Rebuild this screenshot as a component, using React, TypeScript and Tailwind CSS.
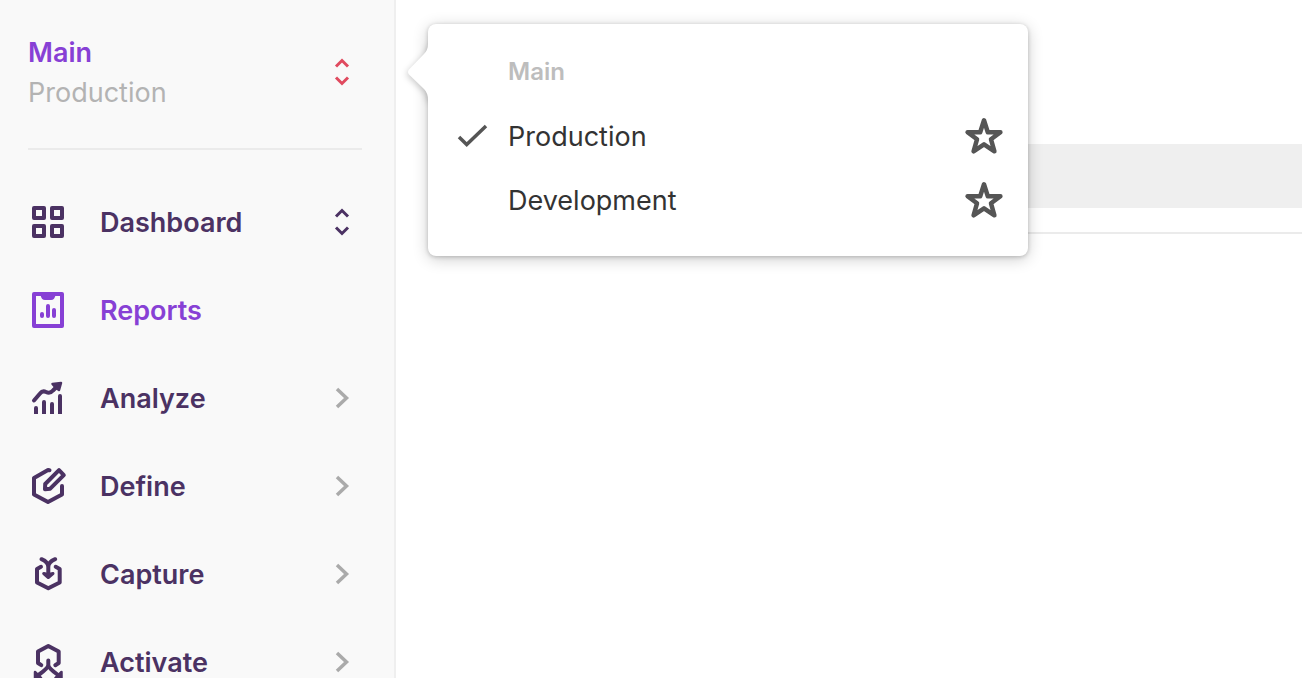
import type { ReactNode } from 'react';

function SidebarIcon({ children }: { children: ReactNode }) {
  return (
    <svg viewBox="0 0 40 40" className="size-10 shrink-0" fill="none" stroke="currentColor" strokeWidth="4" strokeLinecap="round" strokeLinejoin="round" aria-hidden="true">
      {children}
    </svg>
  );
}

const DashboardIcon = () => (
  <SidebarIcon>
    <rect x="6" y="6" width="10" height="10" />
    <rect x="24" y="6" width="10" height="10" />
    <rect x="6" y="24" width="10" height="10" />
    <rect x="24" y="24" width="10" height="10" />
  </SidebarIcon>
);

const ReportsIcon = () => (
  <SidebarIcon>
    <rect x="6" y="4" width="28" height="32" />
    <path d="M12.500 5C13 8 14.500 10 17 10H23C25.500 10 27 8 27.500 5Z" fill="currentColor" stroke="none" />
    <path d="M14 24V26M20 16V26M26 20V26" />
  </SidebarIcon>
);

const AnalyzeIcon = () => (
  <SidebarIcon>
    <path d="M6 22.500L12 15.500Q14.500 12.300 18 14Q22 16 25 12.500L30 7.500" />
    <path d="M24.500 6L33 5L31 12L28 10Z" fill="currentColor" strokeWidth="2.500" />
    <path d="M8 30V34M16 24V34M24 26V34M32 18V34" />
    <path d="M6 34H10V36H6ZM14 34H18V36H14ZM22 34H26V36H22ZM30 34H34V36H30Z" fill="currentColor" stroke="none" />
  </SidebarIcon>
);

const DefineIcon = () => (
  <SidebarIcon>
    <path d="M21.500 4.200L20 4L6 12V28.500L20 36L34 28.500V20" />
    <path d="M17 23.200L17.200 18L31 4.200L35.800 9.200L22.200 22.700Z" />
  </SidebarIcon>
);

const CaptureIcon = () => (
  <SidebarIcon>
    <path d="M13 12.800L9 15V28.500L20.300 34.300L31.700 28.500V15L27.700 12.800" />
    <path d="M13.500 5.200Q20.300 8 20.300 13Q20.300 8 27.200 5.200M20.300 12V22" />
    <path d="M15.700 19.500L20.300 20.500L25 19.500L20.300 23.500Z" fill="currentColor" strokeWidth="3" />
  </SidebarIcon>
);

const ActivateIcon = () => (
  <SidebarIcon>
    <path d="M13.300 23.200L10 21V9.500L20.300 3.900L30.700 9.500V21L27.300 23.200" />
    <path d="M20.300 18.500V23Q20.300 26 10.500 33M20.300 23Q20.300 26 30 33" />
    <path d="M7 30L13 36H7ZM33.500 30L27.500 36H33.500Z" fill="currentColor" strokeWidth="2.500" />
  </SidebarIcon>
);

const UpDown = ({ className }: { className: string }) => (
  <svg viewBox="0 0 40 40" className={`size-10 shrink-0 ${className}`} fill="none" stroke="currentColor" strokeWidth="3" aria-hidden="true">
    <path d="M14 14.500L20 8.500L26 14.500M14 25.500L20 31.500L26 25.500" />
  </svg>
);

const ChevronRight = () => (
  <svg viewBox="0 0 40 40" className="size-10 shrink-0 text-[#aaaaaa]" fill="none" stroke="currentColor" strokeWidth="3.500" aria-hidden="true">
    <path d="M15 11L24.500 20L15 29" />
  </svg>
);

const items = [
  { label: 'Dashboard', icon: <DashboardIcon />, end: <UpDown className="text-[#4b3263]" />, color: 'text-[#4b3263]' },
  { label: 'Reports', icon: <ReportsIcon />, end: null, color: 'text-[#8740d5]' },
  { label: 'Analyze', icon: <AnalyzeIcon />, end: <ChevronRight />, color: 'text-[#4b3263]' },
  { label: 'Define', icon: <DefineIcon />, end: <ChevronRight />, color: 'text-[#4b3263]' },
  { label: 'Capture', icon: <CaptureIcon />, end: <ChevronRight />, color: 'text-[#4b3263]' },
  { label: 'Activate', icon: <ActivateIcon />, end: <ChevronRight />, color: 'text-[#4b3263]' },
];

const environments = [
  { name: 'Production', selected: true },
  { name: 'Development', selected: false },
];

function EnvironmentMenu() {
  return (
    <div className="absolute top-6 left-8 w-[600px] rounded-lg bg-white pt-6 pb-6 shadow-[0_3px_16px_rgba(0,0,0,0.2),0_1px_4px_rgba(0,0,0,0.2)]">
      <svg viewBox="0 0 24 64" className="absolute top-4 -left-5 h-16 w-6 drop-shadow-[-1px_2px_3px_rgba(0,0,0,0.2)] [clip-path:inset(-10px_4px_-10px_-12px)]" aria-hidden="true">
        <path d="M24 4H20Q20 10 16 14L1 29.500Q-1 32 1 34.500L16 49Q20 53 20 60H24Z" fill="#ffffff" />
      </svg>
      <h2 className="pl-20 text-2xl leading-12 font-semibold text-[#bdbdbd]">Main</h2>
      <ul className="mt-2">
        {environments.map((env) => (
          <li key={env.name} className="flex h-16 items-center pr-6 pl-6">
            <button type="button" className="flex flex-1 items-center gap-4 text-left text-[27px] text-[#333333]">
              <svg viewBox="0 0 40 40" className="size-10" fill="none" stroke="#555555" strokeWidth="3.500" aria-hidden="true">
                {env.selected && <path d="M7 21L14.700 28.500L34 10" />}
              </svg>
              <span className="pt-0.5">{env.name}</span>
            </button>
            <button type="button" aria-label={`Favorite ${env.name}`}>
              <svg viewBox="0 0 40 40" className="size-10" fill="none" stroke="#555555" strokeWidth="4.500" strokeLinejoin="round" aria-hidden="true">
                <path d="M20 4.300L23.800 16.200H36.400L27 23.300L30.400 35.300L20 28.400L9.600 35.300L13 23.300L3.600 16.200H16.200Z" />
              </svg>
            </button>
          </li>
        ))}
      </ul>
    </div>
  );
}

export default function App() {
  return (
    <div className="flex h-screen overflow-hidden bg-white font-[Inter,sans-serif]">
      <aside className="w-[396px] shrink-0 overflow-hidden border-r-2 border-[#efefef] bg-[#f9f9f9] pr-8 pl-7">
        <button type="button" className="flex w-full items-start justify-between border-b-2 border-[#ebebeb] pt-8 pb-[35px] text-left text-[27px] leading-10">
          <span className="pt-px">
            <span className="block font-semibold text-[#8740d5]">Main</span>
            <span className="block text-[#b3b3b3]">Production</span>
          </span>
          <span className="pt-5">
            <UpDown className="text-[#e04a5f]" />
          </span>
        </button>
        <nav className="pt-7">
          {items.map((item) => (
            <a key={item.label} href="#" className={`flex h-22 items-center gap-8 text-[27px] font-semibold ${item.color}`}>
              {item.icon}
              <span className="flex-1 pt-0.5">{item.label}</span>
              {item.end}
            </a>
          ))}
        </nav>
      </aside>
      <main className="relative min-w-0 flex-1 pt-36 pl-8">
        <div className="h-16 bg-[#efefef]" />
        <div className="mt-6 h-0.5 bg-[#ebebeb]" />
        <EnvironmentMenu />
      </main>
    </div>
  );
}
